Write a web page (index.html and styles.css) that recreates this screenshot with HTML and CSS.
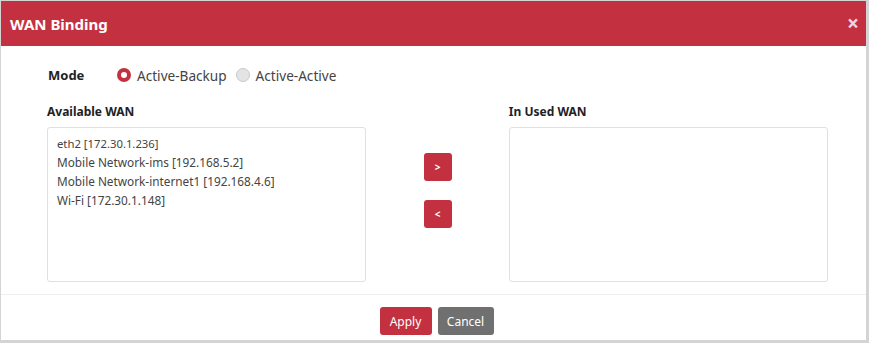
FILE: index.html
```html
<!DOCTYPE html>
<html lang="en">

<head>
    <meta charset="UTF-8">
    <meta name="viewport" content="width=device-width, initial-scale=1.0">
    <title>WAN Binding</title>
    <link rel="stylesheet" href="styles.css">
</head>

<body>
    <div class="modal">
        <div class="modal-header">
            <h3 class="title">WAN Binding</h3>
            <span class="close">&times;</span>
        </div>
        <div class="modal-body">
            <div class="mode-row">
                <span class="label">Mode</span>
                <label class="radio checked"><span class="dot"></span>Active-Backup</label>
                <label class="radio"><span class="dot"></span>Active-Active</label>
            </div>
            <div class="lists">
                <div class="col">
                    <div class="label">Available WAN</div>
                    <ul class="box">
                        <li class="first">eth2 [172.30.1.236]</li>
                        <li>Mobile Network-ims [192.168.5.2]</li>
                        <li>Mobile Network-internet1 [192.168.4.6]</li>
                        <li>Wi-Fi [172.30.1.148]</li>
                    </ul>
                </div>
                <div class="arrows">
                    <button class="btn arrow">&gt;</button>
                    <button class="btn arrow">&lt;</button>
                </div>
                <div class="col">
                    <div class="label">In Used WAN</div>
                    <ul class="box"></ul>
                </div>
            </div>
        </div>
        <div class="modal-footer">
            <button class="btn apply">Apply</button>
            <button class="btn cancel">Cancel</button>
        </div>
    </div>
</body>

</html>
```

FILE: styles.css
```css
* {
    margin: 0;
    padding: 0;
    box-sizing: border-box;
}

body {
    font-family: "Noto Sans", "Open Sans", sans-serif;
    font-size: 12px;
    color: #333;
    background: #fff;
}

.modal {
    width: 869px;
    height: 343px;
    border-top: 1px solid #d4d4d4;
    border-left: 1px solid #d4d4d4;
    border-right: 3px solid #d4d4d4;
    border-bottom: 3px solid #d4d4d4;
    display: flex;
    flex-direction: column;
}

.modal-header {
    background-color: #c33141;
    height: 45px;
    display: flex;
    align-items: center;
    justify-content: space-between;
    padding: 0 7px 0 9px;
    color: #fff;
}

.title {
    font-size: 15px;
    font-weight: bold;
}

.close {
    font-size: 21px;
    font-weight: bold;
    color: #f2d5d8;
    line-height: 1;
}

.modal-body {
    flex: 1;
    padding: 18px 38px 0 46px;
    border-bottom: 1px solid #eee;
}

.label {
    font-weight: bold;
    color: #222;
}

.mode-row {
    display: flex;
    align-items: center;
    height: 22px;
    padding-left: 1px;
}

.mode-row .label {
    width: 69px;
    font-size: 13px;
}

.radio {
    display: flex;
    align-items: center;
    margin-right: 9px;
    color: #444;
    font-size: 13.6px;
}

.radio .dot {
    width: 14px;
    height: 14px;
    border-radius: 50%;
    border: 1px solid #c8c8c8;
    background: #e4e4e4;
    margin-right: 6px;
}

.radio.checked .dot {
    border: 4px solid #c33141;
    background: #fff;
}

.lists {
    display: flex;
    margin-top: 17px;
}

.col {
    width: 320px;
}

.col .label {
    margin-bottom: 7px;
}

.box {
    list-style: none;
    height: 155px;
    border: 1px solid #e0e0e0;
    border-radius: 3px;
    padding: 6px 9px;
    color: #444;
    line-height: 19px;
    font-size: 11.8px;
}

.box li.first {
    font-size: 11.3px;
}

.arrows {
    width: 143px;
    display: flex;
    flex-direction: column;
    align-items: center;
    padding-top: 50px;
    gap: 19px;
}

.btn {
    border: none;
    border-radius: 3px;
    color: #fff;
    font-family: inherit;
    font-size: 12px;
}

.arrow {
    width: 28px;
    height: 28px;
    background-color: #c33141;
    font-weight: bold;
    font-size: 10px;
}

.modal-footer {
    height: 45px;
    display: flex;
    justify-content: center;
    align-items: flex-start;
    gap: 6px;
    padding: 12px 0 0 6px;
}

.apply {
    background-color: #c33141;
    width: 52px;
    height: 28px;
}

.cancel {
    background-color: #707070;
    width: 56px;
    height: 28px;
}
```
